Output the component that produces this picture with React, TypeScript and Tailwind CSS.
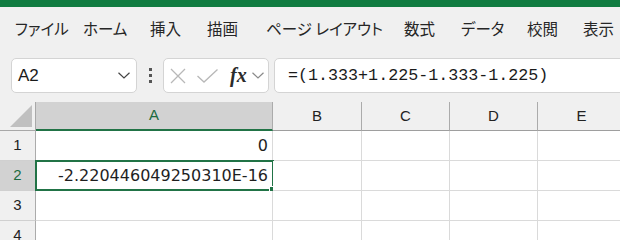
import React from 'react'

const tabs: { label: string; w: string }[] = [
  { label: 'ファイル', w: 'w-[68px]' },
  { label: 'ホーム', w: 'w-[67px]' },
  { label: '挿入', w: 'w-[57px]' },
  { label: '描画', w: 'w-[59px]' },
  { label: 'ページ レイアウト', w: 'w-[138px]' },
  { label: '数式', w: 'w-[57px]' },
  { label: 'データ', w: 'w-[66px]' },
  { label: '校閲', w: 'w-[56px]' },
  { label: '表示', w: 'w-[60px]' },
]

const cols: { name: string; w: string }[] = [
  { name: 'A', w: 'w-[237px]' },
  { name: 'B', w: 'w-[89px]' },
  { name: 'C', w: 'w-[88px]' },
  { name: 'D', w: 'w-[88px]' },
  { name: 'E', w: 'w-[88px]' },
]

const rows: string[] = ['0', '-2.220446049250310E-16', '', '']

const Chevron = ({ className }: { className: string }) => (
  <svg viewBox="0 0 12 7" className={className} fill="none" stroke="currentColor" strokeWidth="1.2">
    <path d="M0.5 0.8 L6 6 L11.5 0.8" />
  </svg>
)

export default function App() {
  return (
    <div className="w-[620px] h-[240px] overflow-hidden bg-[#f0f0f0] font-['Liberation_Sans','Noto_Sans_CJK_JP',sans-serif] text-[#222]">
      <div className="h-[7px] bg-[#107c41]" />

      {/* ribbon tabs */}
      <div className="h-[43px] flex items-center pl-[15px] whitespace-nowrap">
        {tabs.map((t) => (
          <div
            key={t.label}
            className={`${t.w} shrink-0 text-[15.5px] text-[#262626] font-['Noto_Sans_CJK_JP',sans-serif] [font-feature-settings:'palt']`}
          >
            {t.label}
          </div>
        ))}
      </div>

      {/* formula bar */}
      <div className="h-[52px] pt-[8px] flex items-start">
        <div className="ml-[11px] w-[126px] h-[35px] shrink-0 rounded-[5px] border border-[#d4d4d4] bg-white flex items-center pl-[6px] pr-[6px]">
          <span className="flex-1 text-[17px] text-[#1a1a1a]">A2</span>
          <Chevron className="w-[12px] h-[7px] text-[#444]" />
        </div>
        <div className="w-[26px] h-[35px] shrink-0 flex flex-col items-center justify-center gap-[3px]">
          <div className="w-[3px] h-[3px] bg-[#555]" />
          <div className="w-[3px] h-[3px] bg-[#555]" />
          <div className="w-[3px] h-[3px] bg-[#555]" />
        </div>
        <div className="w-[106px] h-[35px] shrink-0 rounded-[5px] border border-[#d4d4d4] bg-white flex items-center pl-[6px]">
          <svg viewBox="0 0 16 16" className="w-[16px] h-[16px] text-[#b8b8b8]" fill="none" stroke="currentColor" strokeWidth="1.3">
            <path d="M1 1 L15 15 M15 1 L1 15" />
          </svg>
          <svg viewBox="0 0 21 14" className="ml-[11px] w-[21px] h-[14px] text-[#b8b8b8]" fill="none" stroke="currentColor" strokeWidth="1.3">
            <path d="M0.5 7 L7 13 L20.5 0.5" />
          </svg>
          <span className="ml-[12px] text-[20px] leading-none italic font-semibold font-['Liberation_Serif',serif] text-[#2b2b2b] -mt-[2px]">
            fx
          </span>
          <Chevron className="ml-[5px] w-[12px] h-[7px] text-[#8a8a8a]" />
        </div>
        <div className="ml-[5px] w-[400px] h-[35px] shrink-0 rounded-l-[5px] border border-[#d4d4d4] bg-white flex items-center pl-[13px]">
          <span className="font-['Liberation_Mono',monospace] text-[16.7px] text-[#1a1a1a] whitespace-nowrap">
            =(1.333+1.225-1.333-1.225)
          </span>
        </div>
      </div>

      {/* grid */}
      <div className="flex flex-col">
        <div className="flex h-[29px]">
          <div className="w-[36px] shrink-0 border-r border-b border-[#a8a8a8] bg-[#f0f0f0] flex items-end justify-end pr-[3px] pb-[3px]">
            <svg viewBox="0 0 22 22" className="w-[22px] h-[22px]">
              <path d="M22 0 L22 22 L0 22 Z" fill="#c0c0c0" />
            </svg>
          </div>
          {cols.map((c, i) => (
            <div
              key={c.name}
              className={`${c.w} shrink-0 flex items-center justify-center text-[15px] border-r border-[#ababab] ${
                i === 0
                  ? 'bg-[#d2d2d2] border-b-2 border-b-[#217346] text-[#1d6b40]'
                  : 'bg-[#f0f0f0] border-b border-b-[#9e9e9e] text-[#222]'
              }`}
            >
              {c.name}
            </div>
          ))}
        </div>

        {rows.map((val, r) => (
          <div key={r} className="flex h-[30px]">
            <div
              className={`w-[36px] shrink-0 border-r border-r-[#ababab] border-b border-b-[#d0d0d0] flex items-center justify-center text-[15px] ${
                r === 1 ? 'bg-[#d2d2d2] text-[#1d6b40]' : 'bg-[#f0f0f0] text-[#222]'
              }`}
            >
              {r + 1}
            </div>
            {cols.map((c, i) => (
              <div
                key={c.name}
                className={`${c.w} shrink-0 relative bg-white border-r border-b border-[#dadada] flex items-center justify-end pr-[4px] text-[16px] font-['DejaVu_Sans',sans-serif] text-[#1f1f1f] whitespace-nowrap`}
              >
                {i === 0 ? val : ''}
                {i === 0 && r === 1 && (
                  <div className="absolute -left-[1px] -top-[1px] -right-[2px] -bottom-[1px] border-2 border-[#217346]">
                    <div className="absolute -right-[4px] -bottom-[4px] w-[6px] h-[6px] bg-[#217346] outline outline-1 outline-white" />
                  </div>
                )}
              </div>
            ))}
          </div>
        ))}
      </div>
    </div>
  )
}
